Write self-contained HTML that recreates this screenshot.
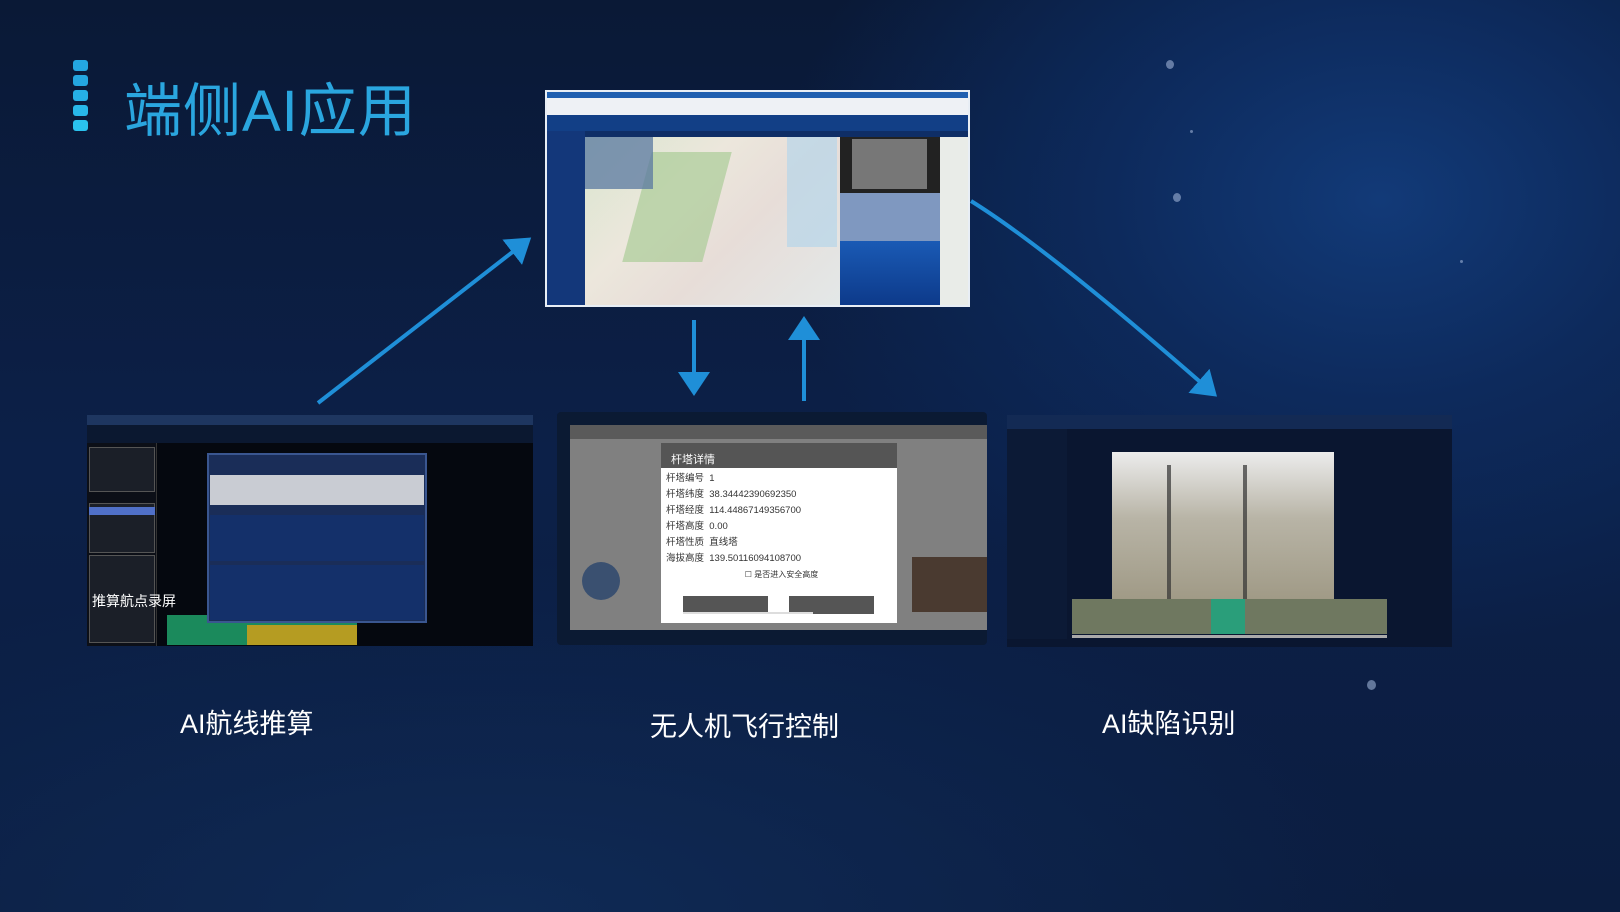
<!DOCTYPE html>
<html><head><meta charset="utf-8"><style>
*{margin:0;padding:0;box-sizing:border-box}
html{background:#0a1a38;width:1620px;height:912px;overflow:hidden}
body{width:1620px;height:912px;overflow:hidden;position:relative;font-family:"Liberation Sans","Noto Sans CJK SC",sans-serif;
background:radial-gradient(ellipse 600px 450px at 1380px 200px,#123a78 0%,#0d2a5c 45%,rgba(12,32,72,0) 100%),radial-gradient(ellipse 900px 350px at 500px 912px,#0f2a55 0%,rgba(12,32,72,0) 100%),linear-gradient(180deg,#0a1936 0%,#0c2048 50%,#0b1d40 100%);}
.abs{position:absolute}
.t{color:#fff;font-size:27px;position:absolute;white-space:nowrap}
.star{position:absolute;border-radius:50%;background:#9fb3d6;opacity:.6}
</style></head><body>
<div class="star" style="left:1166px;top:60px;width:8px;height:9px"></div>
<div class="star" style="left:1173px;top:193px;width:8px;height:9px"></div>
<div class="star" style="left:1367px;top:680px;width:9px;height:10px"></div>
<div class="star" style="left:1460px;top:260px;width:3px;height:3px"></div>
<div class="star" style="left:1190px;top:130px;width:3px;height:3px"></div>
<div class="abs" style="left:73px;top:60px;width:15px">
<div style="height:11px;background:#24a6e0;border-radius:3px;margin-bottom:4px"></div>
<div style="height:11px;background:#24a6e0;border-radius:3px;margin-bottom:4px"></div>
<div style="height:11px;background:#26b0e6;border-radius:3px;margin-bottom:4px"></div>
<div style="height:11px;background:#28b8ea;border-radius:3px;margin-bottom:4px"></div>
<div style="height:11px;background:#2ac2ee;border-radius:3px"></div>
</div>
<div class="abs" style="left:124px;top:64px;font-size:58px;color:#2aa6df;white-space:nowrap;letter-spacing:1px">端侧AI应用</div>

<svg class="abs" style="left:0;top:0" width="1620" height="912">
<defs><marker id="m" markerWidth="8" markerHeight="8" refX="5" refY="4" orient="auto" markerUnits="strokeWidth"><path d="M0,0 L6,4 L0,8 z" fill="#1f8fd8"/></marker></defs>
<g stroke="#1f8fd8" stroke-width="4" fill="none">
<line x1="318" y1="403" x2="528" y2="240" marker-end="url(#m)"/>
<line x1="694" y1="320" x2="694" y2="392" marker-end="url(#m)"/>
<line x1="804" y1="401" x2="804" y2="320" marker-end="url(#m)"/>
<path d="M971,201 Q1050,250 1214,394" marker-end="url(#m)"/>
</g></svg>

<div class="abs" style="left:545px;top:90px;width:425px;height:217px;background:#fff;border:2px solid #e8eef5">
 <div class="abs" style="left:0;top:0;width:421px;height:6px;background:#1f5fb0"></div>
 <div class="abs" style="left:0;top:6px;width:421px;height:17px;background:#eef1f5"></div>
 <div class="abs" style="left:0;top:23px;width:421px;height:16px;background:#123f86"></div>
 <div class="abs" style="left:0;top:39px;width:38px;height:174px;background:#13377a"></div>
 <div class="abs" style="left:38px;top:39px;width:383px;height:6px;background:#0f2e66"></div>
 <div class="abs" style="left:38px;top:45px;width:255px;height:168px;background:linear-gradient(135deg,#d9e6cf 0%,#ece7dc 35%,#e7ddd8 60%,#e3e8e8 100%)"></div>
 <div class="abs" style="left:90px;top:60px;width:80px;height:110px;background:rgba(160,200,140,.6);transform:skewX(-15deg)"></div>
 <div class="abs" style="left:240px;top:45px;width:50px;height:110px;background:#b7d6ea;opacity:.7"></div>
 <div class="abs" style="left:38px;top:45px;width:68px;height:52px;background:rgba(90,120,160,.75)"></div>
 <div class="abs" style="left:293px;top:45px;width:100px;height:56px;background:#222"></div>
 <div class="abs" style="left:305px;top:47px;width:75px;height:50px;background:#777"></div>
 <div class="abs" style="left:293px;top:101px;width:100px;height:48px;background:#7f98c0"></div>
 <div class="abs" style="left:293px;top:149px;width:100px;height:64px;background:linear-gradient(180deg,#1a5ab5,#0d3a8a)"></div>
 <div class="abs" style="left:393px;top:45px;width:28px;height:168px;background:#e9ece8"></div>
</div>

<div class="abs" style="left:87px;top:415px;width:446px;height:231px;background:#05080f;overflow:hidden">
 <div class="abs" style="left:0;top:0;width:446px;height:10px;background:#1e3660"></div>
 <div class="abs" style="left:0;top:10px;width:446px;height:18px;background:#0b1830"></div>
 <div class="abs" style="left:0;top:28px;width:70px;height:203px;background:#0c0f17;border-right:1px solid #333"></div>
 <div class="abs" style="left:2px;top:32px;width:66px;height:45px;background:#1b1f28;border:1px solid #555"></div>
 <div class="abs" style="left:2px;top:88px;width:66px;height:50px;background:#1b1f28;border:1px solid #555"></div>
 <div class="abs" style="left:2px;top:92px;width:66px;height:8px;background:#5070c8"></div>
 <div class="abs" style="left:2px;top:140px;width:66px;height:88px;background:#1b1f28;border:1px solid #555"></div>
 <div class="abs" style="left:80px;top:200px;width:190px;height:30px;background:#1b8a5c"></div>
 <div class="abs" style="left:160px;top:210px;width:110px;height:20px;background:#b59c22"></div>
 <div class="abs" style="left:120px;top:38px;width:220px;height:170px;background:#1a2d58;border:2px solid #3a5690"></div>
 <div class="abs" style="left:123px;top:60px;width:214px;height:30px;background:#c9ccd3"></div>
 <div class="abs" style="left:123px;top:100px;width:214px;height:46px;background:#14306a"></div>
 <div class="abs" style="left:123px;top:150px;width:214px;height:55px;background:#14306a"></div>
 <div class="abs" style="left:5px;top:176px;color:#fff;font-size:14px">推算航点录屏</div>
</div>

<div class="abs" style="left:557px;top:412px;width:430px;height:233px;background:#0b1a33;border-radius:4px;overflow:hidden">
 <div class="abs" style="left:13px;top:13px;width:417px;height:205px;background:#808080"></div>
 <div class="abs" style="left:13px;top:13px;width:417px;height:14px;background:#5a5a5a"></div>
 <div class="abs" style="left:25px;top:150px;width:38px;height:38px;border-radius:50%;background:#3a5070"></div>
 <div class="abs" style="left:355px;top:145px;width:75px;height:55px;background:#4a3a30"></div>
 <div class="abs" style="left:104px;top:31px;width:236px;height:25px;background:#555;color:#fff;font-size:11px;padding:8px 0 0 10px">杆塔详情</div>
 <div class="abs" style="left:104px;top:56px;width:236px;height:155px;background:#fff;font-size:9.5px;color:#333;line-height:16px;padding:3px 0 0 5px">
  <div>杆塔编号 &nbsp;1</div><div>杆塔纬度 &nbsp;38.34442390692350</div><div>杆塔经度 &nbsp;114.44867149356700</div><div>杆塔高度 &nbsp;0.00</div><div>杆塔性质 &nbsp;直线塔</div><div>海拔高度 &nbsp;139.50116094108700</div>
  <div style="text-align:center;font-size:8px">☐ 是否进入安全高度</div>
  <div class="abs" style="left:22px;top:128px;width:85px;height:18px;background:#555"></div>
  <div class="abs" style="left:128px;top:128px;width:85px;height:18px;background:#555"></div>
 </div>
 <div class="abs" style="left:126px;top:200px;width:130px;height:2px;background:#ddd"></div>
</div>

<div class="abs" style="left:1007px;top:415px;width:445px;height:232px;background:#0a1630;overflow:hidden">
 <div class="abs" style="left:0;top:0;width:445px;height:14px;background:#132a54"></div>
 <div class="abs" style="left:0;top:14px;width:60px;height:210px;background:#0c1a36"></div>
 <div class="abs" style="left:105px;top:37px;width:222px;height:148px;background:linear-gradient(180deg,#ececec 0%,#b8b4a6 45%,#a09a86 100%)"></div>
 <div class="abs" style="left:160px;top:50px;width:80px;height:135px;border-left:4px solid #333;border-right:4px solid #333;opacity:.7"></div>
 <div class="abs" style="left:65px;top:184px;width:315px;height:35px;background:#6f7860"></div>
 <div class="abs" style="left:204px;top:184px;width:34px;height:35px;background:#2a9e7a"></div>
 <div class="abs" style="left:65px;top:220px;width:315px;height:3px;background:#aaa"></div>
</div>

<div class="t" style="left:180px;top:702px">AI航线推算</div>
<div class="t" style="left:650px;top:705px">无人机飞行控制</div>
<div class="t" style="left:1102px;top:702px">AI缺陷识别</div>
</body></html>
